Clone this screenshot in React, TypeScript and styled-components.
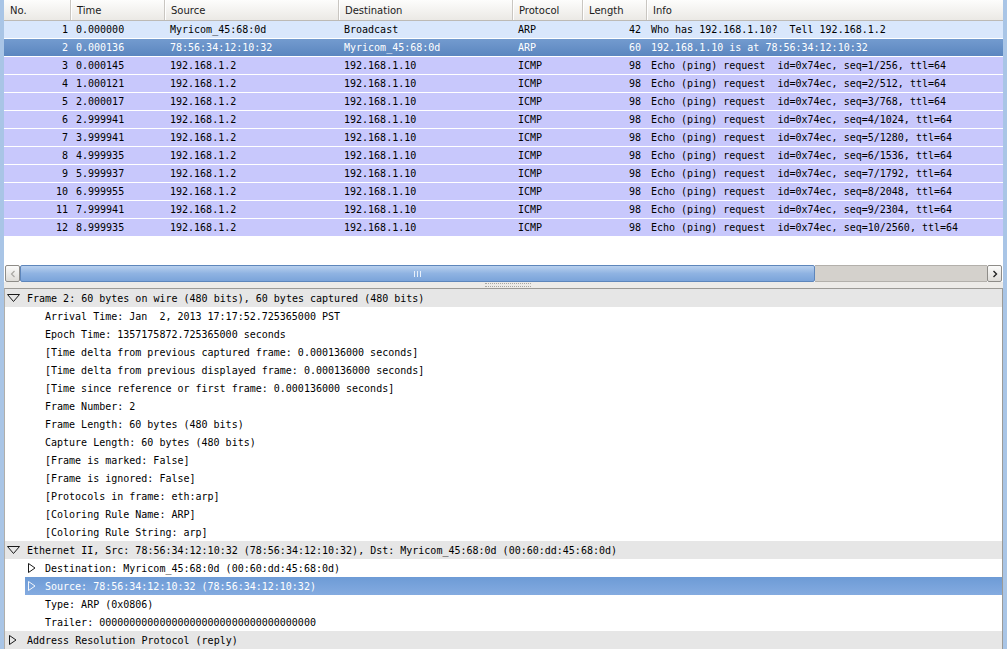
import React from "react";
import styled, { createGlobalStyle, css } from "styled-components";

const Global = createGlobalStyle`
  html, body { margin: 0; padding: 0; background: #ffffff; }
  body { width: 1007px; height: 649px; overflow: hidden; }
`;

const MONO = `"DejaVu Sans Mono", "Liberation Mono", monospace`;
const SANS = `"DejaVu Sans", "Liberation Sans", sans-serif`;

const Window = styled.div`
  width: 1007px;
  height: 649px;
  box-sizing: border-box;
  border-left: 4px solid #a9c5e6;
  border-right: 4px solid #a9c5e6;
  display: flex;
  flex-direction: column;
  background: #edebe8;
  overflow: hidden;
`;

const PacketList = styled.div`
  height: 265px;
  background: #ffffff;
  display: flex;
  flex-direction: column;
  flex: none;
`;

const cols = `66px 94px 174px 174px 70px 64px 1fr`;

const Header = styled.div`
  display: grid;
  grid-template-columns: ${cols};
  height: 20px;
  flex: none;
  background: linear-gradient(#fdfdfc, #ebe9e5);
  border-bottom: 1px solid #bdbab5;
`;

const HeaderCell = styled.div<{ $first?: boolean }>`
  font-family: ${SANS};
  font-size: 10px;
  color: #1c1c1c;
  line-height: 18px;
  padding-top: 2px;
  padding-left: 6px;
  border-left: ${(p) => (p.$first ? "none" : "1px solid #c9c6c1")};
  box-shadow: ${(p) => (p.$first ? "none" : "inset 1px 0 0 #ffffff")};
  white-space: nowrap;
  overflow: hidden;
`;

const rowBg = {
  arp: css`background: #d9e7fc; color: #000;`,
  icmp: css`background: #c8c8fc; color: #000;`,
  sel: css`background: linear-gradient(#739bcf, #5b86bf); color: #ffffff;`,
};

const PacketRow = styled.div<{ $kind: "arp" | "icmp" | "sel" }>`
  display: grid;
  grid-template-columns: ${cols};
  height: 17px;
  margin-bottom: 1px;
  flex: none;
  ${(p) => rowBg[p.$kind]}
`;

const Cell = styled.div<{ $right?: boolean; $pr?: number; $pl?: number }>`
  font-family: ${MONO};
  font-size: 10px;
  line-height: 17px;
  white-space: pre;
  overflow: hidden;
  text-align: ${(p) => (p.$right ? "right" : "left")};
  padding-left: ${(p) => (p.$right ? 0 : p.$pl ?? 6)}px;
  padding-right: ${(p) => p.$pr ?? 0}px;
`;

const HScroll = styled.div`
  height: 17px;
  flex: none;
  display: flex;
  align-items: stretch;
  padding: 0 1px;
  background: #ffffff;
`;

const ScrollBtn = styled.div`
  width: 15px;
  flex: none;
  box-sizing: border-box;
  border: 1px solid #8e8c88;
  border-radius: 2px;
  background: linear-gradient(#fbfbfa, #dedcd8);
  display: flex;
  align-items: center;
  justify-content: center;
`;

const Thumb = styled.div`
  width: 795px;
  flex: none;
  box-sizing: border-box;
  border: 1px solid #5e86bb;
  border-radius: 2px;
  background: linear-gradient(#b8d0ee, #8fb3e2 50%, #7ba4da);
  display: flex;
  align-items: center;
  justify-content: center;
  gap: 2px;
`;

const Grip = styled.span`
  width: 1px;
  height: 6px;
  background: #e8f0fa;
`;

const Trough = styled.div`
  flex: 1;
  background: #d4d1cc;
  border-top: 1px solid #b3b0ab;
  border-bottom: 1px solid #b3b0ab;
`;

const Splitter = styled.div`
  height: 6px;
  flex: none;
  background: #edebe8;
  display: flex;
  justify-content: center;
  padding-left: 8px;
  box-sizing: border-box;
`;

const SplitGrip = styled.div`
  width: 46px;
  height: 2px;
  margin-top: 1px;
  border-top: 1px dotted #a8a6a2;
  border-bottom: 1px dotted #a8a6a2;
`;

const Detail = styled.div`
  flex: 1;
  background: #ffffff;
  border-top: 1px solid #9c9a96;
  border-left: 1px solid #b0aeaa;
  border-right: 1px solid #9c9a96;
  display: flex;
  flex-direction: column;
  overflow: hidden;
`;

const TreeRow = styled.div<{ $level: number }>`
  height: 18px;
  flex: none;
  display: flex;
  padding-left: ${(p) => (p.$level === 0 ? 0 : 20)}px;
`;

const TreeInner = styled.div<{ $top?: boolean; $sel?: boolean; $level: number }>`
  flex: 1;
  display: flex;
  align-items: center;
  font-family: ${MONO};
  font-size: 10px;
  white-space: pre;
  color: ${(p) => (p.$sel ? "#ffffff" : "#000000")};
  background: ${(p) =>
    p.$sel ? "linear-gradient(#6d9bd6, #84abe0)" : p.$top ? "#e6e6e6" : "transparent"};
`;

const Expander = styled.div<{ $level: number }>`
  width: ${(p) => (p.$level === 0 ? 22 : 20)}px;
  height: 18px;
  flex: none;
  display: flex;
  align-items: center;
  padding-left: ${(p) => (p.$level === 0 ? 2 : 3)}px;
  box-sizing: border-box;
`;

const ClosedWrap = styled.span<{ $level: number }>`
  display: flex;
  padding-left: ${(p) => (p.$level === 0 ? 2 : 0)}px;
`;

const OpenTri = () => (
  <svg width="13" height="8" viewBox="0 0 13 8">
    <polygon points="0.5,0.5 12.5,0.5 6.5,7.5" fill="none" stroke="#1a1a1a" strokeWidth="1" />
  </svg>
);

const ClosedTri = ({ light }: { light?: boolean }) => (
  <svg width="8" height="10" viewBox="0 0 8 10">
    <polygon
      points="0.5,0.5 7,5 0.5,9.5"
      fill="none"
      stroke={light ? "#f4f7fb" : "#1a1a1a"}
      strokeWidth="1"
    />
  </svg>
);

const ChevronRight = () => (
  <svg width="6" height="8" viewBox="0 0 6 8">
    <polyline points="1.5,1 4.5,4 1.5,7" fill="none" stroke="#222" strokeWidth="1.4" />
  </svg>
);

const ChevronLeft = () => (
  <svg width="6" height="8" viewBox="0 0 6 8">
    <polyline points="4.5,1 1.5,4 4.5,7" fill="none" stroke="#a9a7a3" strokeWidth="1.2" />
  </svg>
);

type Packet = {
  no: number;
  time: string;
  src: string;
  dst: string;
  proto: string;
  len: number;
  info: string;
  kind: "arp" | "icmp" | "sel";
};

const icmpTimes = [
  "0.000145",
  "1.000121",
  "2.000017",
  "2.999941",
  "3.999941",
  "4.999935",
  "5.999937",
  "6.999955",
  "7.999941",
  "8.999935",
];

const packets: Packet[] = [
  {
    no: 1,
    time: "0.000000",
    src: "Myricom_45:68:0d",
    dst: "Broadcast",
    proto: "ARP",
    len: 42,
    info: "Who has 192.168.1.10?  Tell 192.168.1.2",
    kind: "arp",
  },
  {
    no: 2,
    time: "0.000136",
    src: "78:56:34:12:10:32",
    dst: "Myricom_45:68:0d",
    proto: "ARP",
    len: 60,
    info: "192.168.1.10 is at 78:56:34:12:10:32",
    kind: "sel",
  },
  ...icmpTimes.map((t, i) => ({
    no: i + 3,
    time: t,
    src: "192.168.1.2",
    dst: "192.168.1.10",
    proto: "ICMP",
    len: 98,
    info: `Echo (ping) request  id=0x74ec, seq=${i + 1}/${(i + 1) * 256}, ttl=64`,
    kind: "icmp" as const,
  })),
];

type Node = {
  text: string;
  level: number;
  exp?: "open" | "closed";
  sel?: boolean;
};

const tree: Node[] = [
  { text: "Frame 2: 60 bytes on wire (480 bits), 60 bytes captured (480 bits)", level: 0, exp: "open" },
  { text: "Arrival Time: Jan  2, 2013 17:17:52.725365000 PST", level: 1 },
  { text: "Epoch Time: 1357175872.725365000 seconds", level: 1 },
  { text: "[Time delta from previous captured frame: 0.000136000 seconds]", level: 1 },
  { text: "[Time delta from previous displayed frame: 0.000136000 seconds]", level: 1 },
  { text: "[Time since reference or first frame: 0.000136000 seconds]", level: 1 },
  { text: "Frame Number: 2", level: 1 },
  { text: "Frame Length: 60 bytes (480 bits)", level: 1 },
  { text: "Capture Length: 60 bytes (480 bits)", level: 1 },
  { text: "[Frame is marked: False]", level: 1 },
  { text: "[Frame is ignored: False]", level: 1 },
  { text: "[Protocols in frame: eth:arp]", level: 1 },
  { text: "[Coloring Rule Name: ARP]", level: 1 },
  { text: "[Coloring Rule String: arp]", level: 1 },
  {
    text: "Ethernet II, Src: 78:56:34:12:10:32 (78:56:34:12:10:32), Dst: Myricom_45:68:0d (00:60:dd:45:68:0d)",
    level: 0,
    exp: "open",
  },
  { text: "Destination: Myricom_45:68:0d (00:60:dd:45:68:0d)", level: 1, exp: "closed" },
  { text: "Source: 78:56:34:12:10:32 (78:56:34:12:10:32)", level: 1, exp: "closed", sel: true },
  { text: "Type: ARP (0x0806)", level: 1 },
  { text: "Trailer: 000000000000000000000000000000000000", level: 1 },
  { text: "Address Resolution Protocol (reply)", level: 0, exp: "closed" },
];

const headers = ["No.", "Time", "Source", "Destination", "Protocol", "Length", "Info"];

export default function App() {
  return (
    <>
      <Global />
      <Window>
        <PacketList>
          <Header>
            {headers.map((h, i) => (
              <HeaderCell key={h} $first={i === 0}>
                {h}
              </HeaderCell>
            ))}
          </Header>
          {packets.map((p) => (
            <PacketRow key={p.no} $kind={p.kind}>
              <Cell $right $pr={2}>{p.no}</Cell>
              <Cell>{p.time}</Cell>
              <Cell>{p.src}</Cell>
              <Cell>{p.dst}</Cell>
              <Cell>{p.proto}</Cell>
              <Cell $right $pr={5}>{p.len}</Cell>
              <Cell $pl={5}>{p.info}</Cell>
            </PacketRow>
          ))}
        </PacketList>
        <HScroll>
          <ScrollBtn>
            <ChevronLeft />
          </ScrollBtn>
          <Thumb>
            <Grip />
            <Grip />
            <Grip />
          </Thumb>
          <Trough />
          <ScrollBtn>
            <ChevronRight />
          </ScrollBtn>
        </HScroll>
        <Splitter>
          <SplitGrip />
        </Splitter>
        <Detail>
          {tree.map((n, i) => (
            <TreeRow key={i} $level={n.level}>
              <TreeInner $level={n.level} $top={n.level === 0} $sel={n.sel}>
                <Expander $level={n.level}>
                  {n.exp === "open" && <OpenTri />}
                  {n.exp === "closed" && (
                    <ClosedWrap $level={n.level}>
                      <ClosedTri light={n.sel} />
                    </ClosedWrap>
                  )}
                </Expander>
                {n.text}
              </TreeInner>
            </TreeRow>
          ))}
        </Detail>
      </Window>
    </>
  );
}
